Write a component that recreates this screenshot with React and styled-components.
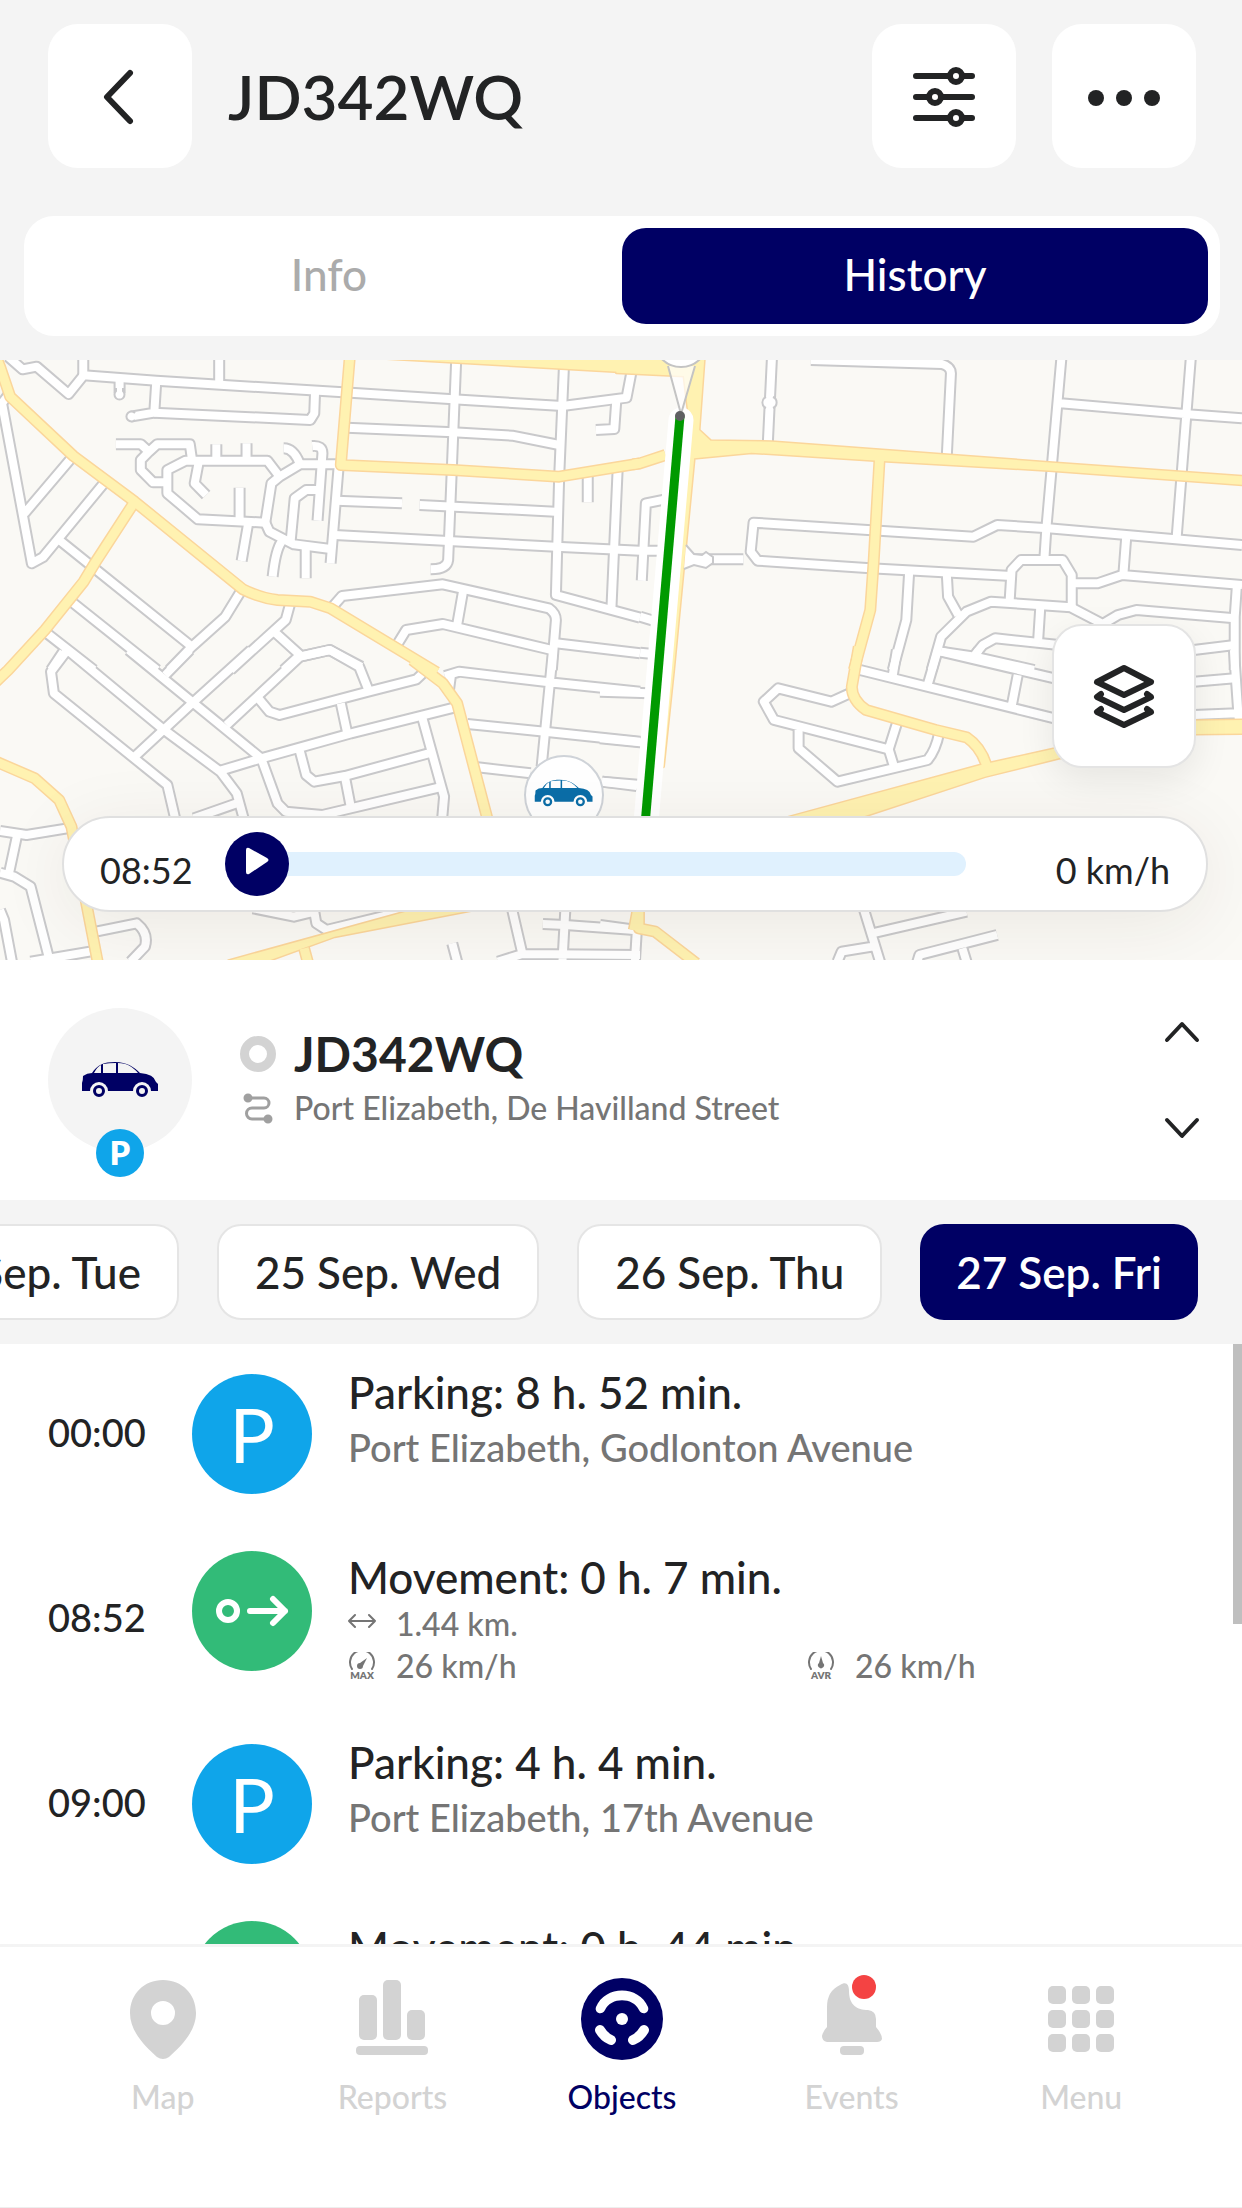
import React, { useState } from "react";
import styled, { createGlobalStyle, css } from "styled-components";

const colors = {
  navy: "#000064",
  text: "#222324",
  grey: "#757575",
  light: "#d3d3d3",
  bg: "#f4f4f4",
  blue: "#0fa5ea",
  green: "#32bb78",
};

// every tile keeps its roads in its own grid, sx is the width of one unit
const tiles = [
  {
    x: 0,
    y: 350,
    sx: 0.40816,
    streets: [
      "M20 20L55 58L90 50L168 132L205 76L383 92L840 127L1110 148L1378 168L1535 143L1548 60",
      "M204 20V76M537 20V98M293 92V130M383 92L378 188L320 200",
      "M378 188L760 210L770 190L772 122",
      "M1118 20L1100 570L1098 630Q1095 658 1055 658",
      "M1382 40L1370 380L1362 735L1568 803",
      "M850 233L1110 247L1255 257L1370 285M1460 240L1505 237L1510 150",
      "M284 283H345L365 305L345 330V360L375 397H408M365 305L385 283H465L470 325",
      "M830 343H735L685 380L655 332H455L410 360V430L485 508L650 518L665 400L685 380",
      "M650 518L660 545L720 583L810 597",
      "M530 283V330M604 280V330M487 335L477 400L505 435M587 413V512",
      "M608 520L592 633M690 575Q675 600 668 680M749 590V685",
      "M695 295Q720 295 735 343M765 288Q790 285 790 310L778 512",
      "M780 420H750L722 445L712 575M830 345L810 640",
      "M825 452L985 460M1028 465L1360 485M820 555L1362 590L1568 602",
      "M1440 380V457M1513 365L1498 775",
      "M20 135L5 160L78 640L105 622L258 395M60 490L178 320M145 570L470 890",
      "M175 755L385 960M110 845L230 960M155 905L125 960M415 960L470 890L552 800L588 728",
      "M710 765L700 810L565 960M672 845L735 915L695 960M735 920L808 900L885 950",
      "M815 770L838 738L1085 703L1345 775Q1362 790 1362 810L1352 960",
      "M1135 720L1120 825M970 890L995 840L1085 822L1352 900M1362 880L1568 910",
    ],
    mains: [
      "M-10 20L0 50L25 140L180 318L330 455L595 718Q640 745 680 750L760 755L810 775L1070 967",
      "M330 455L232 640L205 695L110 840L20 960L-10 995",
      "M857 20L835 345L1110 360L1370 380L1568 340",
    ],
    areas: ["M940 25L1580 70L1580 10L940 10Z"],
  },
  {
    x: 600,
    y: 350,
    sx: 0.4095,
    streets: [
      "M420 20L410 275M515 30L835 42Q857 50 857 70L847 315",
      "M1127 20L1090 535L1085 630M1443 20L1408 565M1125 160L1435 193L1568 205",
      "M1568 585L1095 535L970 525L912 560L375 518L368 605L385 632L660 655L1005 678",
      "M1000 760L1005 660L1028 630H1130L1152 675V770",
      "M1152 700H1215L1275 675L1568 705M1285 562L1278 675",
      "M755 665L748 810L715 960M847 675L850 740L875 795",
      "M810 960L833 860L895 785L955 755L1150 772L1228 822L1265 795L1310 780L1550 805",
      "M1555 712L1550 800V960M1075 775L1070 870",
      "M915 915L935 885L965 865L1120 885M833 905L915 920L1060 960M1450 900L1550 885",
      "M102 692L112 460L160 448M98 602H160M98 800L130 812M98 908L130 912",
      "M190 628H350",
    ],
    mains: ["M80 343L98 340L160 315", "M683 320L668 640L660 780L620 960"],
    areas: [
      "M255 20L242 240L270 272L420 275L690 300L1105 338L1580 380V405L1105 362L690 333L370 308L230 325L180 960L155 1250H145L150 960L215 180L205 78L40 68V15Z",
    ],
  },
  {
    x: 0,
    y: 650,
    sx: 0.40816,
    streets: [
      "M165 0L125 65L132 130L410 405L430 510M170 5L400 238L540 365L580 430L598 510",
      "M315 0L640 325L680 460L700 485L790 495L1085 410",
      "M330 320L475 155L615 0M465 0L405 75M555 225L735 20L808 0L880 50L902 118",
      "M633 145L660 185L685 195L902 125L1020 88L1040 65M835 160L850 245",
      "M540 362L640 325L860 250L1115 172M735 305L750 375L770 395L845 378L1050 310",
      "M1035 205L1088 440L1083 510M845 380L860 475M475 505L580 460",
      "M1090 78L1125 65L1345 97L1568 125M1105 75L1100 120M1355 0L1327 350",
      "M1145 222L1335 245L1568 275M1170 352L1300 370M1475 395L1560 408",
      "M0 543L65 555L165 535M42 555L22 670M0 668L35 680L75 710L120 925",
      "M0 780L10 810L30 940M75 935L220 905M235 845L335 820Q365 850 355 890L320 935",
      "M620 775L720 800L770 785L775 820L800 840L985 785",
      "M1255 780L1280 912L1220 935M1280 912L1568 915M1385 780L1378 935",
      "M1330 822L1385 825L1555 840M1108 880L1120 935",
    ],
    mains: [
      "M-10 335L0 340L85 385L145 450L175 530L240 940",
      "M1010 30L1085 100L1120 160L1195 510",
      "M745 895L755 940M1562 780L1553 840",
    ],
    areas: ["M560 932L1010 780H1160L820 860L640 940Z"],
  },
  {
    x: 600,
    y: 650,
    sx: 0.4095,
    streets: [
      "M0 125L120 130M0 265L110 278M5 395L100 405",
      "M610 130L565 155L435 115L400 155L425 210L705 298L725 220",
      "M485 240V295L580 395L800 330Q820 300 828 250M705 298L718 350",
      "M635 60L1110 205M725 0L715 75M825 0L800 105M833 5L1110 85M1020 75L1005 170",
      "M915 20L925 0M1450 95L1550 85M1450 195L1555 190M1548 0L1560 210",
      "M645 780L685 940M665 850L895 785M580 935L590 905L665 890",
      "M775 935L780 915L970 855M885 895L895 935M0 825L90 840L85 940",
    ],
    mains: [
      "M632 -10L615 110Q615 150 650 180L820 240L895 262Q930 290 945 350",
      "M95 780V835L135 845L235 940",
    ],
    areas: [
      "M450 505L930 345L1115 295L1450 212L1580 210V250L1450 252L1120 325L940 380L630 505Z",
    ],
  },
];

const layers = [
  { kind: "streets", stroke: "#c9c9cb", width: 12, fill: "none" },
  { kind: "streets", stroke: "#ffffff", width: 8, fill: "none" },
  { kind: "areas", stroke: "#fbd69b", width: 3, fill: "#fbd69b" },
  { kind: "mains", stroke: "#fbd69b", width: 12, fill: "none" },
  { kind: "areas", stroke: "none", width: 0, fill: "#fff2b1" },
  { kind: "mains", stroke: "#fff2b1", width: 9, fill: "none" },
];

const days = ["24 Sep. Tue", "25 Sep. Wed", "26 Sep. Thu", "27 Sep. Fri"];

const events = [
  {
    time: "00:00",
    type: "parking",
    title: "Parking: 8 h. 52 min.",
    place: "Port Elizabeth, Godlonton Avenue",
  },
  {
    time: "08:52",
    type: "movement",
    title: "Movement: 0 h. 7 min.",
    distance: "1.44 km.",
    max: "26 km/h",
    avg: "26 km/h",
  },
  {
    time: "09:00",
    type: "parking",
    title: "Parking: 4 h. 4 min.",
    place: "Port Elizabeth, 17th Avenue",
  },
  {
    type: "movement",
    title: "Movement: 0 h. 44 min.",
  },
];

const CarShape = ({ paint, back }) => (
  <>
    <path
      d="M1 30V22Q2 20 2 15Q6 12 11 12C16 4 23 1 34 1C46 1 53 6 59 12Q73 13 75 21L77 23V30Z"
      fill={paint}
    />
    <path
      d="M13 12Q16 6 20 4V12ZM22 12V3Q28 2 35 2V12ZM37 12V2C46 2 52 6 57 12Z"
      fill={back}
    />
    <circle cx="18" cy="30" r="9" fill={back} />
    <circle cx="61" cy="30" r="9" fill={back} />
    <circle cx="18" cy="30" r="4.5" fill={back} stroke={paint} strokeWidth="3" />
    <circle cx="61" cy="30" r="4.5" fill={back} stroke={paint} strokeWidth="3" />
  </>
);

const StreetMap = () => (
  <MapDrawing
    viewBox="0 360 1242 600"
    preserveAspectRatio="xMidYMid slice"
    aria-hidden="true"
  >
    {layers.map((layer, i) => (
      <g
        key={i}
        fill={layer.fill}
        stroke={layer.stroke}
        strokeWidth={layer.width}
        strokeLinejoin="round"
      >
        {tiles.map((tile) => (
          <g
            key={`${tile.x}-${tile.y}`}
            transform={`translate(${tile.x} ${tile.y}) scale(${tile.sx} 0.33333)`}
          >
            {tile[layer.kind].map((d) => (
              <path key={d} d={d} vectorEffect="non-scaling-stroke" />
            ))}
          </g>
        ))}
      </g>
    ))}

    {/* turning circles */}
    <g fill="#fff" stroke="#c9c9cb" strokeWidth="2">
      <path d="M116 388V391A5 5 0 1 0 123 391V388" />
      <path d="M135 413A5 5 0 1 0 135 420" />
      <path d="M766 397A6 6 0 0 0 766 408M773 397A6 6 0 0 1 773 408" />
      <path d="M686 545L694 554L702 555L706 552L713 557V563L706 568L694 565L684 569" />
    </g>

    {/* track */}
    <path d="M681 420L641 880" stroke="#fff" strokeWidth="25" strokeLinecap="round" />
    <path d="M668 366L681 414L695 366" fill="#fff" fillOpacity="0.7" stroke="#c4c4c4" strokeWidth="2" />
    <circle cx="681" cy="340" r="27" fill="#fff" stroke="#c4c4c4" strokeWidth="2" />
    <path d="M680 416L642 860" stroke="#009a00" strokeWidth="9" />
    <circle cx="680" cy="416" r="5" fill="#5f6063" />

    <circle cx="564" cy="795" r="39" fill="#fff" stroke="#cfd3d8" strokeWidth="2" />
    <g transform="translate(534 779) scale(.76)">
      <CarShape paint="#0b6ea8" back="#fff" />
    </g>
  </MapDrawing>
);

const EventIcon = ({ type }) =>
  type === "parking" ? (
    <Circle $type={type}>P</Circle>
  ) : (
    <Circle $type={type}>
      <svg width="76" height="36" viewBox="0 0 76 36" fill="none" stroke="#fff">
        <circle cx="14" cy="18" r="9" strokeWidth="6" />
        <path d="M36 18H71M59 6L71 18L59 30" strokeWidth="6" strokeLinecap="round" strokeLinejoin="round" />
      </svg>
    </Circle>
  );

const DistanceIcon = () => (
  <svg width="30" height="28" viewBox="0 0 30 28" fill="none" stroke={colors.grey} strokeWidth="2">
    <path d="M1 11H27M7 5L1 11L7 17M21 5L27 11L21 17" strokeLinecap="round" strokeLinejoin="round" />
  </svg>
);

const GaugeIcon = ({ label, high }) => (
  <svg width="30" height="28" viewBox="0 0 30 28" fill="none" stroke={colors.grey} strokeWidth="2">
    <path d="M4 17A12 12 0 1 1 24 17" strokeLinecap="round" />
    <path
      d={high ? "M19 6L12 11A3 3 0 1 0 15 14Z" : "M14 4L12 11A3 3 0 1 0 16 11Z"}
      fill={colors.grey}
      stroke="none"
    />
    <text x="14" y="27" fontSize="10" fontWeight="800" textAnchor="middle" fill={colors.grey} stroke="none">
      {label}
    </text>
  </svg>
);

const PinIcon = () => (
  <svg width="84" height="84" viewBox="0 0 84 84">
    <path
      d="M42 3C23 3 9 17 9 36C9 55 25 70 36 80Q42 84 48 80C59 70 75 55 75 36C75 17 61 3 42 3ZM42 24A12 12 0 1 1 42 48A12 12 0 1 1 42 24Z"
      fill="currentColor"
    />
  </svg>
);

const ReportsIcon = () => (
  <svg width="84" height="84" viewBox="0 0 84 84" fill="currentColor">
    <rect x="9" y="18" width="18" height="45" rx="5" />
    <rect x="33" y="3" width="18" height="60" rx="5" />
    <rect x="57" y="33" width="18" height="30" rx="5" />
    <rect x="6" y="69" width="72" height="9" rx="4" />
  </svg>
);

const WheelIcon = () => (
  <svg width="84" height="84" viewBox="0 0 84 84">
    <circle cx="42" cy="42" r="41" fill="currentColor" />
    <circle cx="42" cy="42" r="6" fill="#fff" />
    <path
      d="M16 30C25 8 59 8 68 30C70 36 62 39 59 33C53 20 31 20 25 33C22 39 14 36 16 30Z"
      fill="#fff"
    />
    <path d="M20 53Q24 60 31 63M64 53Q60 60 53 63" stroke="#fff" strokeWidth="10" strokeLinecap="round" fill="none" />
  </svg>
);

const BellIcon = () => (
  <svg width="84" height="84" viewBox="0 0 84 84" fill="currentColor">
    <path d="M30 8C36 4 39 7 39 14C39 28 47 33 58 33Q66 34 66 42V50Q72 57 72 62Q71 65 67 65H17Q12 64 12 59Q13 54 17 50V30Q17 14 30 8Z" />
    <rect x="30" y="69" width="24" height="9" rx="4" />
  </svg>
);

const GridIcon = () => (
  <svg width="84" height="84" viewBox="0 0 84 84" fill="currentColor">
    {[9, 33, 57].map((y) =>
      [9, 33, 57].map((x) => (
        <rect key={`${x}-${y}`} x={x} y={y} width="18" height="18" rx="5" />
      ))
    )}
  </svg>
);

const navItems = [
  { label: "Map", icon: <PinIcon /> },
  { label: "Reports", icon: <ReportsIcon /> },
  { label: "Objects", icon: <WheelIcon />, active: true },
  { label: "Events", icon: <BellIcon />, dot: true },
  { label: "Menu", icon: <GridIcon /> },
];

const App = () => {
  const [tab, setTab] = useState("History");
  const [day, setDay] = useState(3);

  return (
    <Screen>
      <GlobalStyle />
      <Header>
        <SquareButton aria-label="Back">
          <svg width="72" height="72" viewBox="0 0 72 72" fill="none" stroke={colors.text}>
            <path d="M46 13L23 37L46 61" strokeWidth="6" strokeLinecap="round" strokeLinejoin="round" />
          </svg>
        </SquareButton>
        <PageTitle>JD342WQ</PageTitle>
        <SquareButton aria-label="Filters">
          <svg width="72" height="72" viewBox="0 0 72 72" fill="none" stroke={colors.text} strokeWidth="6">
            <path d="M8 16H40M56 16H64M8 37H19M35 37H64M8 58H40M56 58H64" strokeLinecap="round" />
            <circle cx="48" cy="16" r="6" />
            <circle cx="27" cy="37" r="6" />
            <circle cx="48" cy="58" r="6" />
          </svg>
        </SquareButton>
        <SquareButton aria-label="More">
          <svg width="76" height="72" viewBox="0 0 76 72" fill={colors.text}>
            <circle cx="10" cy="38" r="8" />
            <circle cx="38" cy="38" r="8" />
            <circle cx="66" cy="38" r="8" />
          </svg>
        </SquareButton>
      </Header>

      <Tabs>
        {["Info", "History"].map((name) => (
          <TabButton key={name} $active={tab === name} onClick={() => setTab(name)}>
            {name}
          </TabButton>
        ))}
      </Tabs>

      <MapArea>
        <StreetMap />
        <LayersButton aria-label="Map layers">
          <svg width="72" height="72" viewBox="0 0 72 72" fill="none" stroke={colors.text} strokeWidth="6" strokeLinejoin="round" strokeLinecap="round">
            <path d="M36 8L63 22L36 35L9 22Z" />
            <path d="M13 34L9 37L36 50L63 37L59 34" />
            <path d="M13 49L9 52L36 65L63 52L59 49" />
          </svg>
        </LayersButton>
        <Player>
          <PlayerTime>08:52</PlayerTime>
          <PlayButton aria-label="Play">
            <svg width="26" height="30" viewBox="0 0 26 30" fill="#fff">
              <path d="M1 3Q1 0 4 1L22 11Q25 13 22 15L4 27Q1 28 1 25Z" />
            </svg>
          </PlayButton>
          <Progress type="range" min="0" max="100" defaultValue="0" aria-label="Track position" />
          <PlayerSpeed>0 km/h</PlayerSpeed>
        </Player>
      </MapArea>

      <Vehicle>
        <VehicleAvatar>
          <svg width="78" height="38" viewBox="0 0 78 38">
            <CarShape paint={colors.navy} back={colors.bg} />
          </svg>
          <ParkBadge>P</ParkBadge>
        </VehicleAvatar>
        <VehicleInfo>
          <StatusRing />
          <VehicleName>JD342WQ</VehicleName>
          <svg width="36" height="36" viewBox="0 0 36 36" fill="none" stroke="#a0a0a0" strokeWidth="3">
            <path d="M8 8H24A5 5 0 0 1 24 18H12A5 5 0 0 0 12 29H28" />
            <circle cx="8" cy="8" r="3" fill="#a0a0a0" />
            <circle cx="28" cy="29" r="3" fill="#a0a0a0" />
          </svg>
          <VehicleAddress>Port Elizabeth, De Havilland Street</VehicleAddress>
        </VehicleInfo>
        <Steps>
          <StepButton aria-label="Previous object">
            <svg width="36" height="24" viewBox="0 0 36 24">
              <path d="M3 20L18 4L33 20" />
            </svg>
          </StepButton>
          <StepButton aria-label="Next object">
            <svg width="36" height="24" viewBox="0 0 36 24">
              <path d="M3 4L18 20L33 4" />
            </svg>
          </StepButton>
        </Steps>
      </Vehicle>

      <Days>
        {days.map((name, i) => (
          <DayButton key={name} $active={day === i} onClick={() => setDay(i)}>
            {name}
          </DayButton>
        ))}
      </Days>

      <Timeline>
        {events.map((event) => (
          <EventRow key={event.title}>
            <EventTime>{event.time}</EventTime>
            <EventIcon type={event.type} />
            <EventBody>
              <EventTitle>{event.title}</EventTitle>
              {event.place && <EventPlace>{event.place}</EventPlace>}
              {event.distance && (
                <Metrics>
                  <WideMetric>
                    <DistanceIcon />
                    {event.distance}
                  </WideMetric>
                  <Metric>
                    <GaugeIcon label="MAX" high />
                    {event.max}
                  </Metric>
                  <Metric>
                    <GaugeIcon label="AVR" />
                    {event.avg}
                  </Metric>
                </Metrics>
              )}
            </EventBody>
          </EventRow>
        ))}
        <ScrollThumb />
      </Timeline>

      <BottomNav>
        {navItems.map((item) => (
          <NavLink key={item.label} href="#" $active={item.active}>
            <NavIcon>
              {item.icon}
              {item.dot && <Dot />}
            </NavIcon>
            {item.label}
          </NavLink>
        ))}
      </BottomNav>
    </Screen>
  );
};

const GlobalStyle = createGlobalStyle`
  * {
    box-sizing: border-box;
  }

  body {
    margin: 0;
    color: ${colors.text};
    font-family: "Lato", "Open Sans", sans-serif;
    font-weight: 500;
  }

  button {
    font: inherit;
    color: inherit;
    border: none;
    padding: 0;
    cursor: pointer;
  }

  svg {
    display: block;
    flex-shrink: 0;
  }
`;

const Screen = styled.div`
  height: 100vh;
  display: flex;
  flex-direction: column;
  background: ${colors.bg};
  overflow: hidden;
`;

const Header = styled.header`
  display: flex;
  align-items: center;
  gap: 36px;
  padding: 24px 46px 48px 48px;
`;

const SquareButton = styled.button`
  width: 144px;
  height: 144px;
  flex-shrink: 0;
  display: flex;
  align-items: center;
  justify-content: center;
  background: #fff;
  border-radius: 30px;
`;

const PageTitle = styled.h1`
  flex: 1;
  margin: 0;
  font-size: 62px;
  line-height: 72px;
  font-weight: 600;
`;

const Tabs = styled.div`
  display: flex;
  margin: 0 22px 24px 24px;
  padding: 12px;
  background: #fff;
  border-radius: 30px;
`;

const TabButton = styled.button`
  flex: 1;
  height: 96px;
  padding-bottom: 4px;
  border-radius: 24px;
  font-size: 44px;
  color: ${(p) => (p.$active ? "#fff" : "#ababab")};
  background: ${(p) => (p.$active ? colors.navy : "transparent")};
`;

const MapArea = styled.section`
  position: relative;
  height: 600px;
  flex-shrink: 0;
  overflow: hidden;
  background: #faf9f5;
`;

const MapDrawing = styled.svg`
  width: 100%;
  height: 100%;
  fill: none;
`;

const LayersButton = styled(SquareButton)`
  position: absolute;
  right: 46px;
  top: 264px;
  border: 2px solid #e4e4e4;
  box-shadow: 0 12px 36px rgba(0, 0, 0, 0.08);
`;

const Player = styled.div`
  position: absolute;
  left: 62px;
  right: 34px;
  bottom: 48px;
  height: 96px;
  display: flex;
  align-items: center;
  padding: 0 36px;
  background: #fff;
  border: 2px solid #e0e0e0;
  border-radius: 48px;
  box-shadow: 0 12px 72px rgba(60, 40, 0, 0.08);
  font-size: 36px;
  font-weight: 400;
`;

const PlayerTime = styled.span`
  width: 125px;
  padding-top: 12px;
`;

const PlayerSpeed = styled.span`
  width: 204px;
  padding-top: 12px;
  text-align: right;
`;

const PlayButton = styled.button`
  position: relative;
  z-index: 1;
  width: 64px;
  height: 64px;
  flex-shrink: 0;
  display: flex;
  align-items: center;
  justify-content: center;
  padding: 0 0 4px 2px;
  background: ${colors.navy};
  border-radius: 50%;
`;

const Progress = styled.input`
  appearance: none;
  flex: 1;
  min-width: 0;
  height: 24px;
  margin: 0 0 0 -48px;
  background: #e0f1fe;
  border-radius: 12px;

  &::-webkit-slider-thumb {
    appearance: none;
    width: 24px;
    height: 24px;
    background: transparent;
  }
`;

const Vehicle = styled.section`
  display: flex;
  height: 240px;
  flex-shrink: 0;
  padding: 48px 42px 0 48px;
  background: #fff;
`;

const VehicleAvatar = styled.div`
  position: relative;
  width: 144px;
  height: 144px;
  flex-shrink: 0;
  display: flex;
  align-items: center;
  justify-content: center;
  border-radius: 50%;
  background: ${colors.bg};
`;

const ParkBadge = styled.span`
  position: absolute;
  left: 48px;
  bottom: -25px;
  width: 48px;
  height: 48px;
  border-radius: 50%;
  background: ${colors.blue};
  color: #fff;
  font-size: 32px;
  line-height: 48px;
  font-weight: 800;
  text-align: center;
`;

const VehicleInfo = styled.div`
  flex: 1;
  display: grid;
  grid-template-columns: 36px 1fr;
  grid-template-rows: 60px 48px;
  align-content: start;
  align-items: center;
  column-gap: 18px;
  padding: 16px 0 0 48px;
`;

const StatusRing = styled.span`
  width: 36px;
  height: 36px;
  border: 9px solid ${colors.light};
  border-radius: 50%;
`;

const VehicleName = styled.h2`
  margin: 0;
  font-size: 48px;
  line-height: 60px;
  font-weight: 700;
`;

const VehicleAddress = styled.p`
  margin: 0;
  font-size: 32px;
  line-height: 36px;
  color: ${colors.grey};
`;

const Steps = styled.div`
  display: flex;
  flex-direction: column;
  gap: 48px;
`;

const StepButton = styled.button`
  width: 36px;
  height: 48px;
  display: flex;
  align-items: center;
  background: none;

  path {
    fill: none;
    stroke: ${colors.text};
    stroke-width: 4;
    stroke-linecap: round;
    stroke-linejoin: round;
  }
`;

const Days = styled.div`
  display: flex;
  justify-content: flex-end;
  gap: 38px;
  flex-shrink: 0;
  padding: 24px 44px 24px 0;
  overflow: hidden;
`;

const DayButton = styled.button`
  height: 96px;
  flex-shrink: 0;
  padding: 0 36px;
  border-radius: 24px;
  font-size: 44px;
  white-space: nowrap;

  ${(p) =>
    p.$active
      ? css`
          color: #fff;
          background: ${colors.navy};
          font-weight: 600;
        `
      : css`
          background: #fff;
          border: 2px solid #e5e5e5;
        `}
`;

const Timeline = styled.main`
  position: relative;
  flex: 1;
  min-height: 0;
  overflow: hidden;
  background: #fff;
`;

const EventRow = styled.article`
  display: flex;
  align-items: flex-start;
  height: 185px;
  padding: 22px 0 0 48px;
`;

const EventTime = styled.time`
  width: 144px;
  flex-shrink: 0;
  font-size: 38px;
  line-height: 132px;
`;

const Circle = styled.div`
  width: 120px;
  height: 120px;
  flex-shrink: 0;
  display: flex;
  align-items: center;
  justify-content: center;
  margin-top: ${(p) => (p.$type === "parking" ? "8px" : "0")};
  border-radius: 50%;
  background: ${(p) => (p.$type === "parking" ? colors.blue : colors.green)};
  color: #fff;
  font-size: 76px;
  line-height: 120px;
  font-weight: 400;
`;

const EventBody = styled.div`
  flex: 1;
  padding-left: 36px;
`;

const EventTitle = styled.h3`
  margin: 0;
  font-size: 44px;
  line-height: 52px;
  font-weight: 500;
`;

const EventPlace = styled.p`
  margin: 0;
  font-size: 38px;
  line-height: 58px;
  color: ${colors.grey};
`;

const Metrics = styled.div`
  display: grid;
  grid-template-columns: 1fr 1fr;
  column-gap: 24px;
  color: ${colors.grey};
  font-size: 32px;
  line-height: 42px;
`;

const Metric = styled.div`
  display: flex;
  align-items: center;
  gap: 18px;
`;

const WideMetric = styled(Metric)`
  grid-column: 1 / 3;
`;

const ScrollThumb = styled.span`
  position: absolute;
  top: 0;
  right: 0;
  width: 9px;
  height: 280px;
  background: #bfbfbf;
`;

const BottomNav = styled.nav`
  display: grid;
  grid-template-columns: repeat(5, 1fr);
  height: 264px;
  flex-shrink: 0;
  padding: 30px 46px 0 48px;
  background: #fff;
  border-top: 3px solid #f4f4f4;
  border-bottom: 1px solid #eee;
`;

const NavLink = styled.a`
  display: flex;
  flex-direction: column;
  align-items: center;
  gap: 18px;
  color: ${(p) => (p.$active ? colors.navy : colors.light)};
  font-size: 32px;
  line-height: 36px;
  text-decoration: none;
`;

const NavIcon = styled.span`
  position: relative;
`;

const Dot = styled.span`
  position: absolute;
  top: -2px;
  right: 18px;
  width: 24px;
  height: 24px;
  border-radius: 50%;
  background: #f44343;
`;

export default App;
